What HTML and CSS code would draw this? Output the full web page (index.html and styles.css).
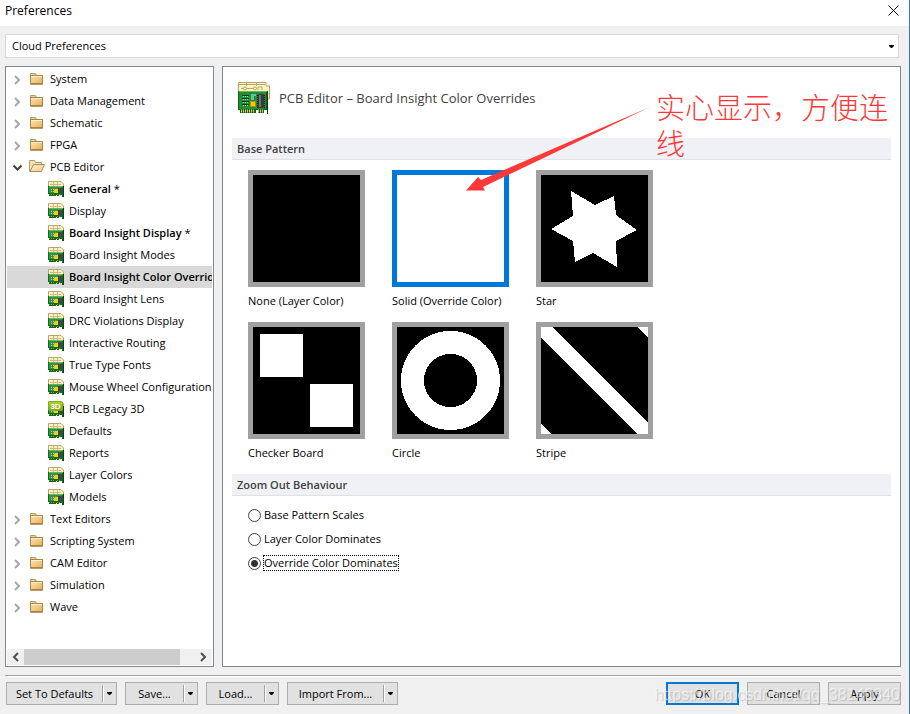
FILE: index.html
```html
<!DOCTYPE html>
<html lang="en">
<head>
<meta charset="utf-8">
<title>Preferences</title>
<link rel="stylesheet" href="styles.css">
</head>
<body>
<svg class="defs" aria-hidden="true">
  <defs>
    <linearGradient id="gold" x1="0" y1="0" x2="1" y2="1"><stop offset="0" stop-color="#fbe6bd"/><stop offset="1" stop-color="#ecae52"/></linearGradient>
    <linearGradient id="cream" x1="0" y1="0" x2="1" y2="1"><stop offset="0" stop-color="#fdf0d0"/><stop offset="1" stop-color="#f0c88a"/></linearGradient>
    <linearGradient id="lime" x1="0" y1="0" x2="0" y2="1"><stop offset="0" stop-color="#b5d334"/><stop offset="1" stop-color="#79a80a"/></linearGradient>
    <symbol id="folder" viewBox="0 0 16 16">
      <path d="M1.5 13.500V2.500H6.500L7.500 4.500H13.500V13.500Z" fill="#e7d5a9" stroke="#b49a63"/>
      <path d="M1.500 4.500H13.500V12.500H1.500Z" fill="url(#gold)" stroke="#a98543"/>
      <path d="M2 5.500H13" stroke="#fff0cf"/>
    </symbol>
    <symbol id="folder-open" viewBox="0 0 16 16">
      <path d="M.5 12.500V1.500H5.500L6.500 3.500H12.500V6.500H4.500L1.500 12.500Z" fill="#f3e2b9" stroke="#b49a63"/>
      <path d="M1 12.500L4.500 5.500H15.500L12.500 12.500Z" fill="url(#cream)" stroke="#b08d50"/>
    </symbol>
    <symbol id="board" viewBox="0 0 16 16">
      <path d="M.5 6V.5H13L15.500 3V7" fill="#fff3c4" stroke="#b7a56d"/>
      <path d="M2 3.500H13M5.500 1V5M9.500 1V5" stroke="#cdbb83" fill="none"/>
      <path d="M0 5H16V16H14V14H11V15H9V14H8V15H1V13H0Z" fill="#17671f"/>
      <path d="M1 6H14V12H1Z" fill="#359346"/>
      <path d="M1 5.500H15" stroke="#69b95b"/>
      <path d="M3 8.500H6M3 10.500H6" stroke="#92d5a2" stroke-dasharray="1 1"/>
      <path d="M7 8H10V12H6V9Z" fill="#f5cf12"/>
      <path d="M10 7H14V12H10Z" fill="#3d464c"/>
      <path d="M1 13.500H7M9 13.500H13" stroke="#73a62b" stroke-dasharray="1 1"/>
      <path d="M15.500 5V16" stroke="#08450d"/>
    </symbol>
    <symbol id="board-3d" viewBox="0 0 16 16">
      <use href="#board" width="16" height="16"/>
      <rect x=".5" y=".5" width="14" height="9" rx="1" fill="url(#lime)" stroke="#83a823"/>
      <text x="7.500" y="8" text-anchor="middle" font-family="Liberation Sans" font-size="8" font-weight="700" fill="#fff">3D</text>
    </symbol>
    <symbol id="board-large" viewBox="0 0 32 32">
      <path d="M.5 12V.5H28L31.500 4V17H28" fill="#fff3c4" stroke="#b7a56d"/>
      <path d="M28 0V4H32" fill="#fff" stroke="#b7a56d"/>
      <path d="M1 2.500H27M8.500 0V4M18.500 0V4M3 6.500H7M9 6.500H17M20 8V5H24V8" stroke="#b7a56d" fill="none"/>
      <circle cx="7" cy="6.500" r="1.500" fill="#fff3c4" stroke="#b7a56d"/><circle cx="17" cy="6.500" r="1.500" fill="#fff3c4" stroke="#b7a56d"/>
      <path d="M0 9H30V31H29V28H26V31H20V28H18V31H2V28H0Z" fill="#126020"/>
      <path d="M1 10H28V27H1Z" fill="#258c36"/>
      <path d="M1 9.500H29" stroke="#68bd50"/>
      <path d="M4 13.500H11M4 16.500H11M4 19.500H11M4 22.500H11" stroke="#063b15"/>
      <path d="M5 14.500H11M5 17.500H11M5 20.500H11M5 23.500H11" stroke="#a6dfbc" stroke-dasharray="1 1"/>
      <path d="M13 12H18V14H16V18H13Z" fill="#5bc6a1"/>
      <rect x="12.500" y="19.500" width="5" height="5" fill="#f6ca0b" stroke="#b68d00"/>
      <rect x="20" y="12" width="6" height="14" rx="1" fill="#343a3d"/>
      <path d="M22 13V25" stroke="#6b7377" stroke-width="2"/>
      <path d="M19.500 13V26M26.500 13V26" stroke="#111" stroke-dasharray="1 1"/>
      <path d="M3 29H17M20 29H26" stroke="#dccd50" stroke-width="3" stroke-dasharray="1 1"/>
      <path d="M29.500 10V32" stroke="#08380d"/>
    </symbol>
    <symbol id="chev" viewBox="0 0 9 10"><path d="M2 1L6 5L2 9" fill="none" stroke="currentColor" stroke-width="2"/></symbol>
    <symbol id="caret" viewBox="0 0 5 3"><path d="M0 0H5V1L3 3H2L0 1Z" fill="#000"/></symbol>
  </defs>
</svg>

<div class="dialog">
  <header class="titlebar">
    <h1>Preferences</h1>
    <button class="close" aria-label="Close"><svg width="11" height="11" viewBox="0 0 11 11"><path d="M.5 .5L10.500 10.500M10.500 .5L.5 10.500" stroke="#000" fill="none"/></svg></button>
  </header>

  <div class="combo">
    <select aria-label="Preferences source"><option>Cloud Preferences</option></select>
    <svg class="caret"><use href="#caret"/></svg>
  </div>

  <div class="columns">
    <nav class="side">
      <ul class="tree">
        <li><a class="row" href="#"><svg class="chev"><use href="#chev"/></svg><svg class="icon"><use href="#folder"/></svg>System</a></li>
        <li><a class="row" href="#"><svg class="chev"><use href="#chev"/></svg><svg class="icon"><use href="#folder"/></svg>Data Management</a></li>
        <li><a class="row" href="#"><svg class="chev"><use href="#chev"/></svg><svg class="icon"><use href="#folder"/></svg>Schematic</a></li>
        <li><a class="row" href="#"><svg class="chev"><use href="#chev"/></svg><svg class="icon"><use href="#folder"/></svg>FPGA</a></li>
        <li><a class="row" href="#"><svg class="chev open"><use href="#chev"/></svg><svg class="icon"><use href="#folder-open"/></svg>PCB Editor</a>
          <ul class="branch">
            <li><a class="row" href="#"><svg class="icon"><use href="#board"/></svg><b>General</b>&nbsp;*</a></li>
            <li><a class="row" href="#"><svg class="icon"><use href="#board"/></svg>Display</a></li>
            <li><a class="row" href="#"><svg class="icon"><use href="#board"/></svg><b>Board Insight Display</b>&nbsp;*</a></li>
            <li><a class="row" href="#"><svg class="icon"><use href="#board"/></svg>Board Insight Modes</a></li>
            <li><a class="row selected" href="#"><svg class="icon"><use href="#board"/></svg><b>Board Insight Color Overrides</b></a></li>
            <li><a class="row" href="#"><svg class="icon"><use href="#board"/></svg>Board Insight Lens</a></li>
            <li><a class="row" href="#"><svg class="icon"><use href="#board"/></svg>DRC Violations Display</a></li>
            <li><a class="row" href="#"><svg class="icon"><use href="#board"/></svg>Interactive Routing</a></li>
            <li><a class="row" href="#"><svg class="icon"><use href="#board"/></svg>True Type Fonts</a></li>
            <li><a class="row" href="#"><svg class="icon"><use href="#board"/></svg>Mouse Wheel Configuration</a></li>
            <li><a class="row" href="#"><svg class="icon"><use href="#board-3d"/></svg>PCB Legacy 3D</a></li>
            <li><a class="row" href="#"><svg class="icon"><use href="#board"/></svg>Defaults</a></li>
            <li><a class="row" href="#"><svg class="icon"><use href="#board"/></svg>Reports</a></li>
            <li><a class="row" href="#"><svg class="icon"><use href="#board"/></svg>Layer Colors</a></li>
            <li><a class="row" href="#"><svg class="icon"><use href="#board"/></svg>Models</a></li>
          </ul>
        </li>
        <li><a class="row" href="#"><svg class="chev"><use href="#chev"/></svg><svg class="icon"><use href="#folder"/></svg>Text Editors</a></li>
        <li><a class="row" href="#"><svg class="chev"><use href="#chev"/></svg><svg class="icon"><use href="#folder"/></svg>Scripting System</a></li>
        <li><a class="row" href="#"><svg class="chev"><use href="#chev"/></svg><svg class="icon"><use href="#folder"/></svg>CAM Editor</a></li>
        <li><a class="row" href="#"><svg class="chev"><use href="#chev"/></svg><svg class="icon"><use href="#folder"/></svg>Simulation</a></li>
        <li><a class="row" href="#"><svg class="chev"><use href="#chev"/></svg><svg class="icon"><use href="#folder"/></svg>Wave</a></li>
      </ul>
      <div class="scrollbar">
        <button class="back" aria-label="Scroll left"><svg><use href="#chev"/></svg></button>
        <div class="track"><div class="thumb"></div></div>
        <button aria-label="Scroll right"><svg><use href="#chev"/></svg></button>
      </div>
    </nav>

    <main class="page">
      <div class="page-head">
        <svg width="32" height="32"><use href="#board-large"/></svg>
        <h2>PCB Editor – Board Insight Color Overrides</h2>
      </div>
      <section>
        <h3>Base Pattern</h3>
        <div class="patterns">
          <button class="pattern"><svg viewBox="0 0 107 107"></svg><span>None (Layer Color)</span></button>
          <button class="pattern chosen"><svg viewBox="0 0 107 107"></svg><span>Solid (Override Color)</span></button>
          <button class="pattern"><svg viewBox="0 0 107 107"><path d="M30 16L54 30L73 21L75 40L96 55L75 66L76 92L52 78L34 87L32 66L10 54L32 41Z"/></svg><span>Star</span></button>
          <button class="pattern"><svg viewBox="0 0 107 107"><path d="M7 7H50V50H7ZM57 57H100V100H57Z"/></svg><span>Checker Board</span></button>
          <button class="pattern"><svg viewBox="0 0 107 107"><circle class="ring" cx="53.500" cy="53.500" r="38"/></svg><span>Circle</span></button>
          <button class="pattern"><svg viewBox="0 0 107 107"><path d="M0 0H11L107 96V107H96L0 11ZM97 0H107V11ZM0 97L11 107H0Z"/></svg><span>Stripe</span></button>
        </div>
      </section>
      <section>
        <h3>Zoom Out Behaviour</h3>
        <div class="radios">
          <label><input type="radio" name="zoom"><span>Base Pattern Scales</span></label>
          <label><input type="radio" name="zoom"><span>Layer Color Dominates</span></label>
          <label><input type="radio" name="zoom" checked><span>Override Color Dominates</span></label>
        </div>
      </section>
      <svg class="arrow" width="186" height="86" viewBox="0 0 186 86"><path d="M1 84.500L13 71L16 74L185 1L18 81L20 84.500Z" fill="#fc3838"/></svg>
      <p class="note" lang="zh">实心显示，方便连线</p>
    </main>
  </div>

  <footer class="footer">
    <div class="split wide"><button>Set To Defaults</button><button class="drop" aria-label="Set To Defaults options"><svg class="caret"><use href="#caret"/></svg></button></div>
    <div class="split"><button>Save...</button><button class="drop" aria-label="Save options"><svg class="caret"><use href="#caret"/></svg></button></div>
    <div class="split"><button>Load...</button><button class="drop" aria-label="Load options"><svg class="caret"><use href="#caret"/></svg></button></div>
    <div class="split wide"><button>Import From...</button><button class="drop" aria-label="Import options"><svg class="caret"><use href="#caret"/></svg></button></div>
    <span class="spacer"></span>
    <button class="btn default">OK</button>
    <button class="btn">Cancel</button>
    <button class="btn">Apply</button>
    <span class="watermark">https://blog.csdn.net/qq_38140340</span>
  </footer>
</div>
</body>
</html>
```
FILE: styles.css
```css
* { box-sizing: border-box; }
body {
  margin: 0;
  font: 11px/16px "Open Sans", "Noto Sans", sans-serif;
  color: #000;
  background: #f0f0f0;
}
.defs { position: absolute; width: 0; height: 0; }
button, select { font: inherit; color: inherit; }
button { padding: 0; border: 0; background: none; }
h1, h2, h3, p, ul { margin: 0; padding: 0; font-weight: 400; }
b { font-weight: 600; }
ul { list-style: none; }
svg { flex: none; }

.dialog {
  display: flex;
  flex-direction: column;
  min-height: 100vh;
  border-right: 1px solid #2b7ab5;
}
.titlebar {
  display: flex;
  justify-content: space-between;
  height: 26px;
  padding: 0 10px 5px 5px;
  align-items: center;
  background: #fff;
}
.titlebar h1 { font-size: 12px; }
.close { display: flex; }

.combo { display: grid; margin: 8px 10px 8px 5px; align-items: center; }
.combo > * { grid-area: 1 / 1; }
.combo select {
  appearance: none;
  height: 24px;
  padding: 0 6px;
  border: 1px solid #d9d9d9;
  border-radius: 0;
  background: #fff;
}
.caret { width: 5px; height: 3px; }
.combo .caret { justify-self: end; margin-right: 5px; pointer-events: none; }

.columns { flex: 1; display: flex; gap: 8px; margin: 0 8px 8px 5px; }
.side, .page { border: 1px solid #828790; background: #fff; }
.side {
  display: flex;
  flex-direction: column;
  justify-content: space-between;
  width: 209px;
  padding: 1px;
}
.tree { overflow: hidden; }
.row {
  display: flex;
  align-items: center;
  height: 22px;
  padding-left: 6px;
  color: inherit;
  text-decoration: none;
  white-space: nowrap;
}
.icon { width: 16px; height: 16px; margin-right: 5px; }
.chev { width: 9px; height: 10px; margin: 2px 7px 0 0; color: #a6a6a6; }
.chev.open { color: #404040; transform: rotate(90deg); }
.branch .row { padding-left: 41px; }
.selected { background: #d9d9d9; }

.scrollbar { display: flex; height: 16px; background: #f0f0f0; color: #505050; }
.scrollbar button { display: grid; place-items: center; width: 17px; }
.scrollbar svg { width: 9px; height: 10px; }
.back { transform: scaleX(-1); }
.track { flex: 1; }
.thumb { width: 91%; height: 100%; background: #cdcdcd; }

.page { position: relative; flex: 1; padding: 14px 9px; }
.page-head { display: flex; gap: 9px; align-items: center; height: 34px; padding-left: 6px; margin-bottom: 23px; }
.page-head h2 { font-size: 13px; color: #404040; }
h3 {
  height: 22px;
  padding: 0 5px;
  border-bottom: 1px solid #dfe1e6;
  background: #f0f1f5;
  color: #404040;
  font-size: 11px;
  line-height: 22px;
}
section h3 { font-weight: 600; }
.patterns {
  display: grid;
  grid-template-columns: repeat(auto-fill, 117px);
  gap: 12px 27px;
  max-width: 440px;
  padding: 10px 16px 12px;
}
.pattern { display: flex; flex-direction: column; gap: 6px; height: 140px; white-space: nowrap; text-align: left; }
.pattern svg { width: 117px; height: 117px; border: 5px solid #a0a0a0; background: #000; fill: #fff; shape-rendering: crispEdges; }
.pattern .ring { fill: none; stroke: #fff; stroke-width: 23px; }
.pattern.chosen svg { border-color: #0078d7; background: #fff; }

.radios { display: flex; flex-direction: column; align-items: flex-start; gap: 8px; padding: 11px 16px; }
.radios label { display: flex; align-items: center; gap: 2px; height: 16px; }
.radios input {
  appearance: none;
  width: 13px;
  height: 13px;
  margin: 0;
  border: 1px solid #404040;
  border-radius: 50%;
}
.radios input:checked { background: radial-gradient(circle, #333 0 3px, #fff 4px); }
.radios span { border: 1px dotted transparent; line-height: 14px; }
.radios input:checked + span { border-color: #000; }

.arrow { position: absolute; left: 242px; top: 39px; }
.note {
  position: absolute;
  left: 433px;
  right: 0;
  top: 21px;
  color: #fc3838;
  font: 300 29px/36px "Noto Sans CJK SC", sans-serif;
}

.footer {
  position: relative;
  display: flex;
  gap: 8px;
  margin: 0 8px 0 5px;
  padding: 6px 0 9px 1px;
  border-top: 1px solid #a0a0a0;
  box-shadow: inset 0 1px #fff;
}
.split, .btn { width: 73px; height: 23px; border: 1px solid #adadad; background: #e1e1e1; }
.split { display: flex; align-items: center; }
.split.wide { width: 111px; }
.split button:first-child { flex: 1; }
.split .drop { display: grid; place-items: center; width: 14px; height: 17px; border-left: 1px solid #a0a0a0; box-shadow: inset 1px 0 #fff; }
.spacer { flex: 1; }
.btn.default { border: 2px solid #0078d7; }
.watermark {
  position: absolute;
  right: 1px;
  top: 9px;
  color: rgba(255, 255, 255, .6);
  text-shadow: 1px 1px 1px rgba(120, 120, 120, .35);
  font: 16px/20px "Liberation Sans", sans-serif;
  pointer-events: none;
}
```
